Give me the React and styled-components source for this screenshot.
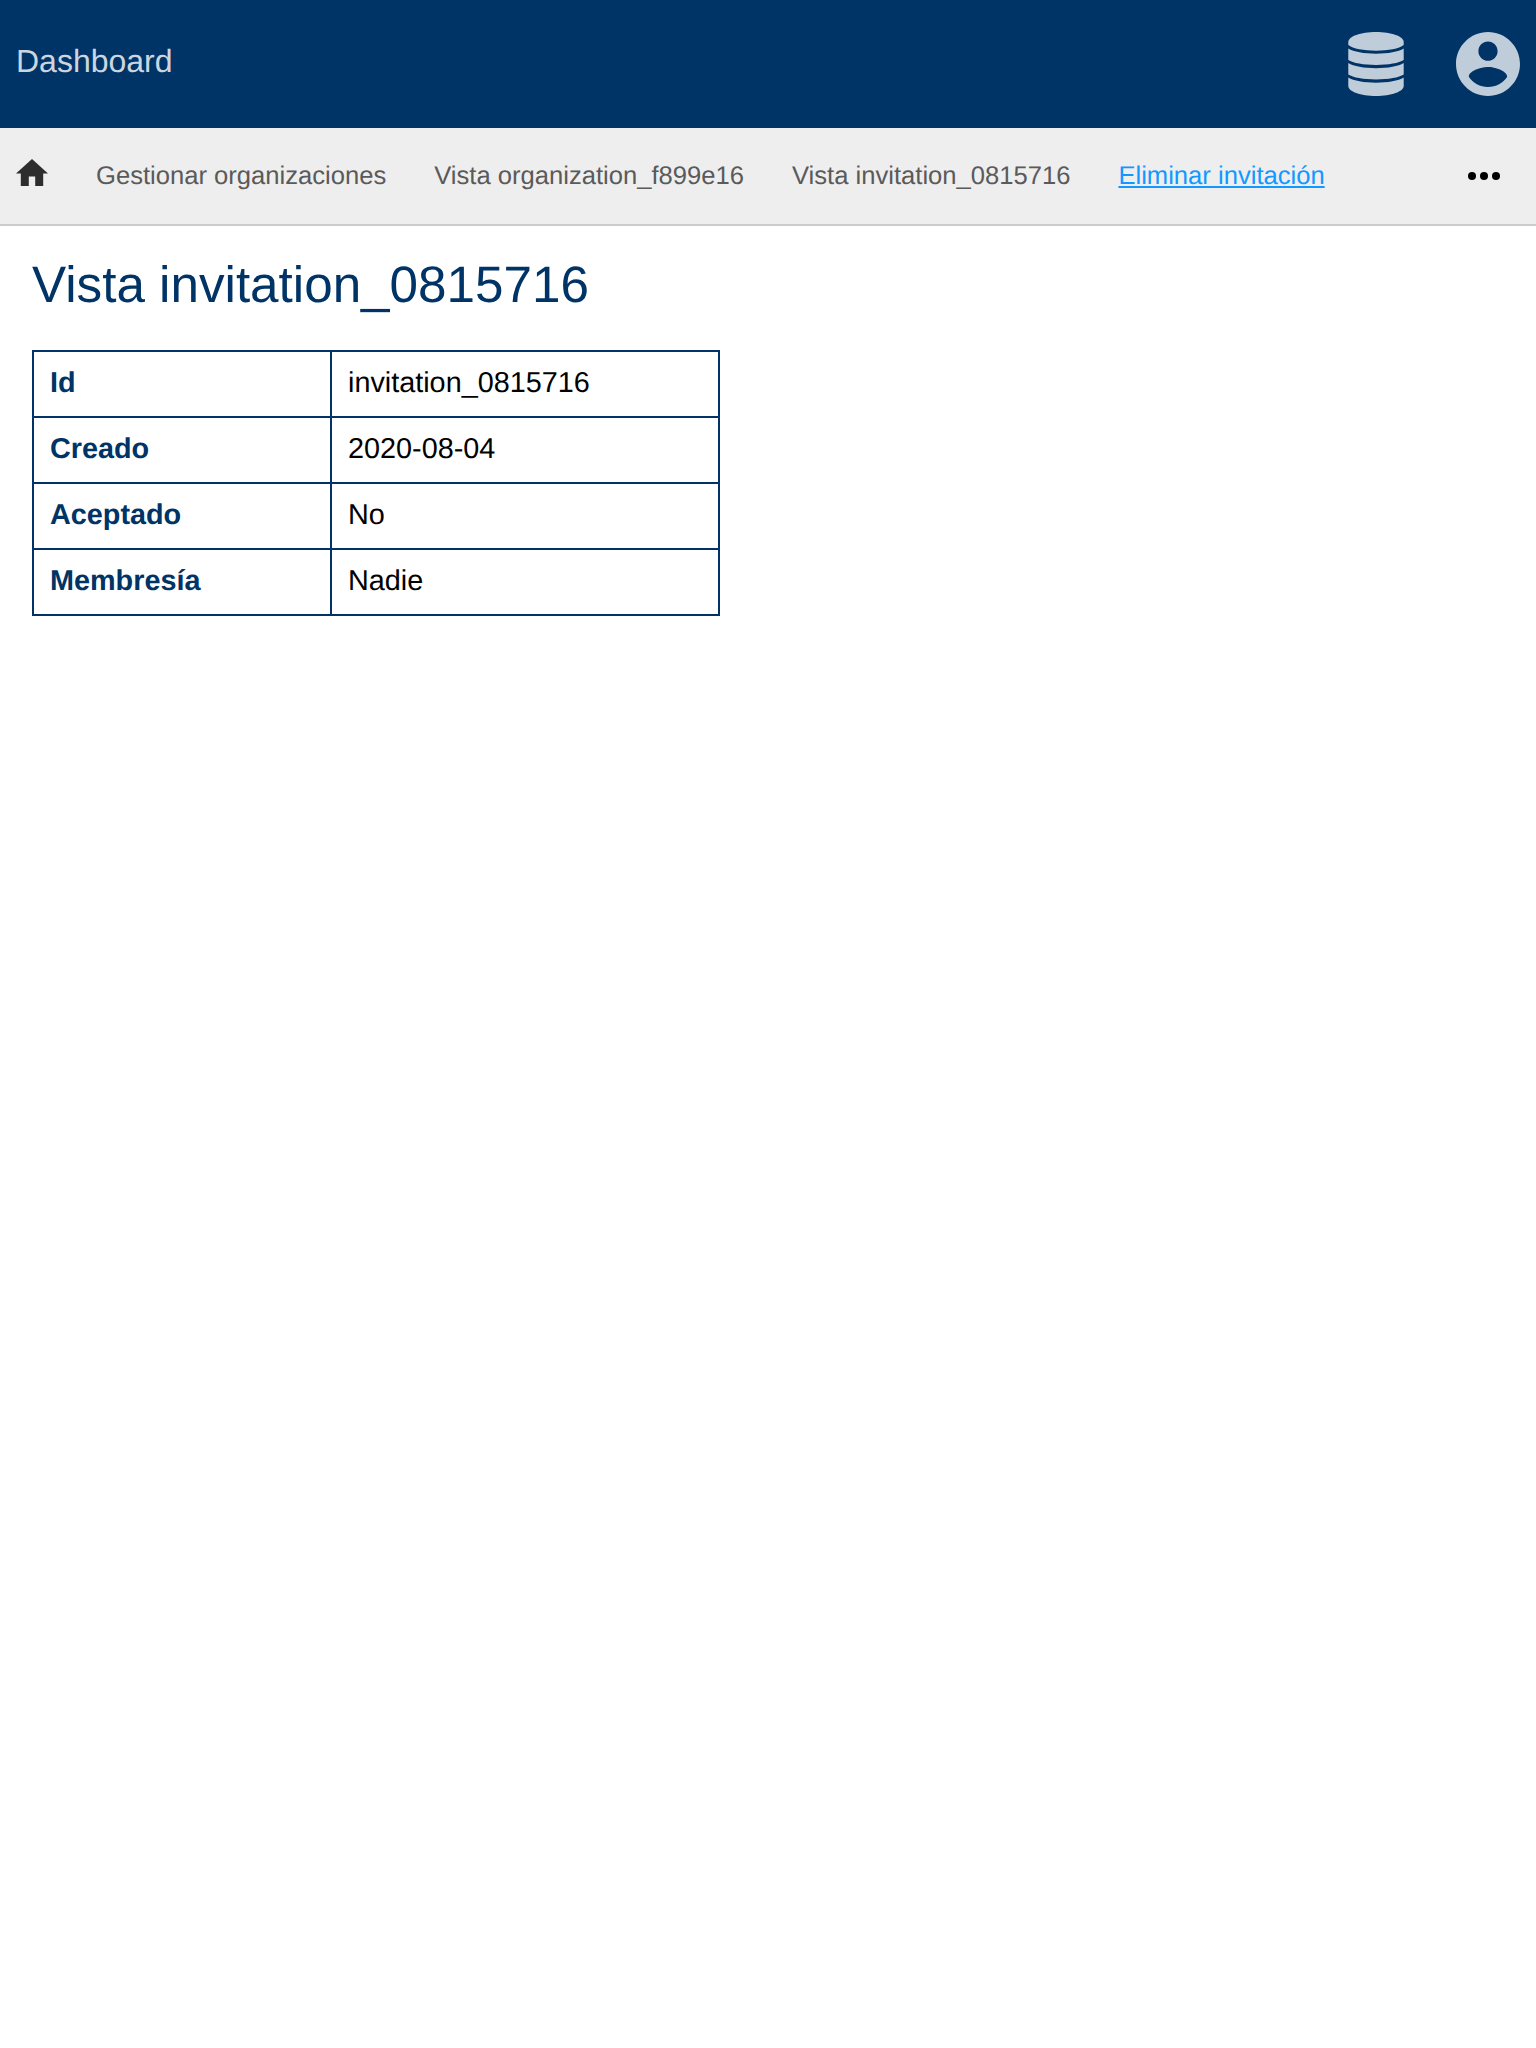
import React from "react";
import styled, { createGlobalStyle } from "styled-components";

const GlobalStyle = createGlobalStyle`
  body {
    margin: 0;
    background: #fff;
    color: #000;
    font-family: "Liberation Sans", Arial, sans-serif;
    text-rendering: geometricPrecision;
  }
`;

const Header = styled.header`
  display: flex;
  align-items: center;
  justify-content: space-between;
  box-sizing: border-box;
  height: 128px;
  padding: 0 16px;
  background: #003366;
`;

const Brand = styled.a`
  padding-bottom: 6px;
  font-size: 32px;
  line-height: 36px;
  color: #ccd6e0;
`;

const HeaderActions = styled.div`
  display: flex;
  align-items: center;
  gap: 52px;
`;

const HeaderIcon = styled.svg`
  display: block;
  width: ${(p) => p.$width}px;
  height: 64px;
  fill: #bfccd9;
`;

const Breadcrumbs = styled.nav`
  display: flex;
  align-items: center;
  box-sizing: border-box;
  height: 98px;
  padding: 0 36px 0 16px;
  gap: 48px;
  background: #eee;
  border-bottom: 2px solid #ccc;
`;

const HomeIcon = styled.svg`
  display: block;
  width: 32px;
  height: 27.2px;
  margin-bottom: 7.6px;
  fill: #2d2d2d;
`;

const Crumb = styled.a`
  font-size: 25.6px;
  line-height: 30px;
  white-space: nowrap;
  color: ${(p) => (p.$active ? "#1199ff" : "#5a5a5a")};
  text-decoration: ${(p) => (p.$active ? "underline" : "none")};
`;

const MoreIcon = styled.svg`
  display: block;
  width: 32px;
  height: 8px;
  margin-left: auto;
  fill: #000;
`;

const Main = styled.main`
  padding: 30px 32px;
`;

const Title = styled.h1`
  margin: 0 0 36px;
  font-size: 51.2px;
  font-weight: 400;
  line-height: 58px;
  color: #003366;
`;

const Table = styled.table`
  width: 688px;
  table-layout: fixed;
  border-collapse: collapse;
  font-size: 28.8px;
  line-height: 32px;
`;

const LabelCell = styled.th`
  box-sizing: border-box;
  width: 298px;
  height: 66px;
  padding: 15px 16px 17px;
  border: 2px solid #003366;
  text-align: left;
  color: #003366;
`;

const ValueCell = styled.td`
  padding: 15px 16px 17px;
  border: 2px solid #003366;
`;

const crumbs = [
  { label: "Gestionar organizaciones" },
  { label: "Vista organization_f899e16" },
  { label: "Vista invitation_0815716" },
  { label: "Eliminar invitación", active: true },
];

const rows = [
  ["Id", "invitation_0815716"],
  ["Creado", "2020-08-04"],
  ["Aceptado", "No"],
  ["Membresía", "Nadie"],
];

export default function App() {
  return (
    <>
      <GlobalStyle />
      <Header>
        <Brand>Dashboard</Brand>
        <HeaderActions>
          <HeaderIcon $width={56} viewBox="0 0 56 64">
            <path d="M.3 10C.3 4.400 12.700 0 28 0s27.700 4.400 27.700 10v3C51 16.600 40.500 18.700 28 18.700S5 16.600.3 13z" />
            <path d="M.3 16.500C5.500 19.800 16 21.700 28 21.700s22.500-1.900 27.700-5.200v11.600C51 31.200 40.500 33 28 33S5 31.200.3 28.100z" />
            <path d="M.3 31C5.500 34.300 16 36.200 28 36.200S50.500 34.300 55.700 31v11.600c-4.700 3.100-15.200 4.900-27.700 4.900S5 45.700.3 42.600z" />
            <path d="M.3 45.500C5.500 48.800 16 50.700 28 50.700s22.500-1.900 27.700-5.200V54c0 5.600-12.400 10-27.700 10S.3 59.600.3 54z" />
          </HeaderIcon>
          <HeaderIcon $width={64} viewBox="2 2 20 20">
            <path d="M12 2C6.48 2 2 6.48 2 12s4.48 10 10 10 10-4.48 10-10S17.52 2 12 2zm0 3c1.66 0 3 1.34 3 3s-1.34 3-3 3-3-1.34-3-3 1.34-3 3-3zm0 14.2c-2.5 0-4.71-1.28-6-3.22.03-1.99 4-3.08 6-3.08 1.99 0 5.97 1.09 6 3.08-1.29 1.94-3.5 3.22-6 3.22z" />
          </HeaderIcon>
        </HeaderActions>
      </Header>
      <Breadcrumbs>
        <HomeIcon viewBox="2 3 20 17">
          <path d="M10 20v-6h4v6h5v-8h3L12 3 2 12h3v8z" />
        </HomeIcon>
        {crumbs.map((c) => (
          <Crumb key={c.label} $active={c.active}>
            {c.label}
          </Crumb>
        ))}
        <MoreIcon viewBox="0 0 32 8">
          <circle cx="4" cy="4" r="4" />
          <circle cx="16" cy="4" r="4" />
          <circle cx="28" cy="4" r="4" />
        </MoreIcon>
      </Breadcrumbs>
      <Main>
        <Title>Vista invitation_0815716</Title>
        <Table>
          <tbody>
            {rows.map(([label, value]) => (
              <tr key={label}>
                <LabelCell>{label}</LabelCell>
                <ValueCell>{value}</ValueCell>
              </tr>
            ))}
          </tbody>
        </Table>
      </Main>
    </>
  );
}
